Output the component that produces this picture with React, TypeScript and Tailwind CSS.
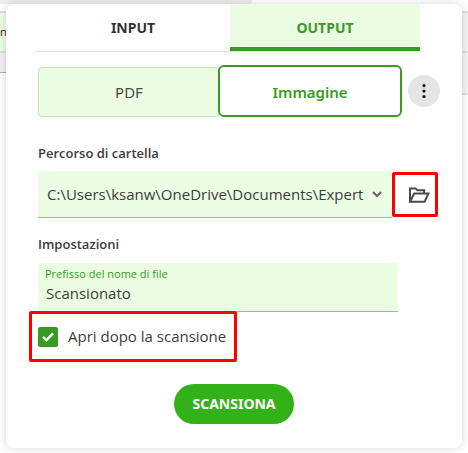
import React, { useState } from 'react';

type Tab = 'INPUT' | 'OUTPUT';
type Format = 'PDF' | 'Immagine';

const TABS: Tab[] = ['INPUT', 'OUTPUT'];
const FORMATS: Format[] = ['PDF', 'Immagine'];

const FolderIcon = () => (
  <svg width="22" height="18" viewBox="0 0 22 18" fill="none" stroke="#4a4a4a" strokeWidth="2">
    <path d="M2 15.8V2.6h5.6l1.8 1.6H16.2v3" />
    <path d="M2 15.8 6.2 7.5H20.4L16.6 15.8Z" />
  </svg>
);

// Page that stays visible around the dialog
const Backdrop = () => (
  <div aria-hidden="true" className="absolute inset-0 flex justify-between bg-white">
    <div className="absolute left-0 top-0 h-1 w-63 rounded-br bg-[#ededed]" />
    <div className="w-1.5 pt-[11px]">
      <div className="flex h-[42px] items-center border-y-2 border-[#dedede] bg-[#ebfde2] text-[11px] text-[#222]">n</div>
      <div className="h-5 border-b border-[#ababab] bg-[#f2f2f2]" />
    </div>
    <div className="w-1.5 pt-[11px]">
      <div className="h-[42px] border-y-2 border-[#dedede] bg-[#f4f4f4]" />
      <div className="h-[42px] border-b-2 border-[#dedede] bg-[#f4f4f4]" />
    </div>
  </div>
);

export default function App() {
  const [tab, setTab] = useState<Tab>('OUTPUT');
  const [format, setFormat] = useState<Format>('Immagine');
  const [prefix, setPrefix] = useState('Scansionato');
  const [openAfter, setOpenAfter] = useState(true);

  return (
    <div className="relative min-h-screen px-1.5 pt-1 font-['Open_Sans',sans-serif] text-[#3c3c3c]">
      <Backdrop />

      <main className="relative rounded-lg bg-white pb-6 shadow-[0_0_10px_rgba(0,0,0,0.16)]">
        {/* Tabs */}
        <div role="tablist" className="ml-[30px] mr-10 flex h-12 gap-0.5 border-b border-[#e2e2e2] px-0.5 font-['Noto_Sans',sans-serif]">
          {TABS.map((name) => (
            <button
              key={name}
              role="tab"
              aria-selected={tab === name}
              onClick={() => setTab(name)}
              className={`flex-1 rounded-t border-b-4 pt-1 text-sm font-bold ${
                tab === name ? 'border-[#389b24] bg-[#ebfde2] text-[#389b24]' : 'border-transparent text-[#333]'
              }`}
            >
              {name}
            </button>
          ))}
        </div>

        {/* Format */}
        <div className="ml-8 mr-[22px] mt-[13px] flex items-center gap-1.5 font-['Noto_Sans',sans-serif]">
          <div className="flex flex-1 items-end -space-x-0.5">
            {FORMATS.map((name) => (
              <button
                key={name}
                onClick={() => setFormat(name)}
                className={`flex-1 text-[15px] ${
                  format === name
                    ? 'z-10 h-13 rounded-md border-2 border-[#389b24] bg-white pt-0.5 font-semibold text-[#389b24]'
                    : 'h-[50px] rounded border border-[#bfeab3] bg-[#ebfde2] text-[#4a4a4a]'
                }`}
              >
                {name}
              </button>
            ))}
          </div>
          <button aria-label="Altro" className="flex size-8 items-center justify-center rounded-full bg-[#e5e5e5]">
            <svg width="4" height="16" viewBox="0 0 4 16" fill="#111">
              <circle cx="2" cy="2.5" r="1.6" />
              <circle cx="2" cy="8" r="1.6" />
              <circle cx="2" cy="13.5" r="1.6" />
            </svg>
          </button>
        </div>

        {/* Folder path */}
        <div className="ml-8 mr-6 mt-6">
          <label htmlFor="folder" className="block text-[13px] leading-6 font-semibold">Percorso di cartella</label>
          <div className="mt-1.5 flex items-center">
            <div className="relative min-w-0 flex-1">
              <select
                id="folder"
                className="h-[47px] w-full appearance-none rounded-t border-b border-[#8ccb7c] bg-[#ebfde2] pl-[9px] pr-6 text-[15px] outline-none"
              >
                <option>C:\Users\ksanw\OneDrive\Documents\Expert</option>
              </select>
              <svg className="pointer-events-none absolute right-2.5 top-5" width="10" height="7" viewBox="0 0 10 7" fill="none" stroke="#666" strokeWidth="2">
                <path d="M1 1l4 4 4-4" />
              </svg>
            </div>
            <button aria-label="Sfoglia" className="flex h-[45px] w-[46px] items-center justify-center rounded-xs border-3 border-[#f00] bg-white pl-2">
              <FolderIcon />
            </button>
          </div>
        </div>

        {/* Settings */}
        <h2 className="ml-8 mt-3.5 text-[13px] leading-6 font-semibold">Impostazioni</h2>
        <div className="ml-8 mr-16 mt-[7px] h-[49px] rounded-t border-b border-[#8ccb7c] bg-[#ebfde2] pt-1">
          <label htmlFor="prefix" className="block pl-[7px] text-[11px] leading-[14px] font-medium text-[#389b24]">Prefisso del nome di file</label>
          <input
            id="prefix"
            value={prefix}
            onChange={(e) => setPrefix(e.target.value)}
            className="block h-6 w-full bg-transparent pl-2 text-[15px] outline-none"
          />
        </div>
        <label className="relative -mt-px ml-[23px] flex h-[51px] w-fit items-center gap-2.5 rounded-xs border-3 border-[#f00] bg-white pl-1.5 pr-2 text-[15px]">
          <input
            type="checkbox"
            checked={openAfter}
            onChange={(e) => setOpenAfter(e.target.checked)}
            className="peer size-5 appearance-none rounded-xs border border-[#389b24] checked:bg-[#389b24]"
          />
          <svg className="pointer-events-none absolute left-2.5 hidden peer-checked:block" width="12" height="10" viewBox="0 0 12 10" fill="none" stroke="#fff" strokeWidth="2.4">
            <path d="M1 4.8l3.4 3.4L11 1.4" />
          </svg>
          Apri dopo la scansione
        </label>

        <button className="mx-auto mt-[22px] block h-10 w-30 rounded-full bg-[#33b118] font-['Noto_Sans',sans-serif] text-sm font-bold text-white">
          SCANSIONA
        </button>
      </main>
    </div>
  );
}
